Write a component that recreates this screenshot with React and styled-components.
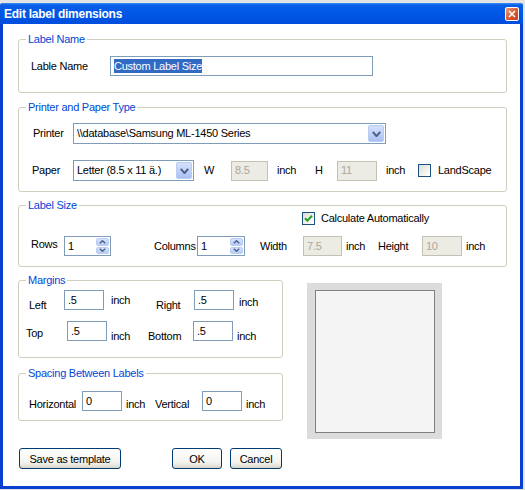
import styled, { createGlobalStyle } from "styled-components";

const GlobalStyle = createGlobalStyle`
  * {
    box-sizing: border-box;
  }
  html,
  body {
    margin: 0;
    padding: 0;
    background: #e4e4e4;
  }
  body {
    font-family: "Liberation Sans", Arial, sans-serif;
    font-size: 11px;
    letter-spacing: -0.25px;
    color: #000;
  }
`;

const Window = styled.div`
  width: 523px;
  height: 486px;
  margin-top: 3px;
  display: flex;
  flex-direction: column;
  background: #0b3fd0;
  border-radius: 3px 3px 0 0;
`;

const TitleBar = styled.div`
  flex: none;
  height: 21px;
  display: flex;
  align-items: center;
  justify-content: space-between;
  padding: 0 4px;
  border-radius: 3px 3px 0 0;
  background: linear-gradient(
    180deg,
    #3d8ff7 0px,
    #0a5fe8 2px,
    #0056e6 50%,
    #004ede 100%
  );
`;

const Title = styled.span`
  color: #fff;
  font-weight: bold;
  font-size: 12px;
  line-height: 14px;
`;

const CloseButton = styled.div`
  width: 14px;
  height: 14px;
  display: flex;
  align-items: center;
  justify-content: center;
  border: 1px solid #fff;
  border-radius: 2px;
  background: linear-gradient(135deg, #ee9a7c 0%, #d8582f 55%, #c4411c 100%);
`;

const Body = styled.div`
  flex: 1;
  margin: 0 3px 3px;
  padding: 9px 13px 0 15px;
  background: #fff;
`;

const Group = styled.fieldset`
  margin: ${(p) => p.$mt || 0}px 0 0;
  padding: 0 0 ${(p) => p.$pb || 0}px;
  min-width: 0;
  border: 1px solid #d0d0bf;
  border-radius: 3px;
`;

const Legend = styled.legend`
  margin-left: 7px;
  padding: 0 2px;
  line-height: 13px;
  color: #0046d5;
`;

const Row = styled.div`
  display: flex;
  align-items: center;
  height: ${(p) => p.$h || 20}px;
  margin-top: ${(p) => p.$mt || 0}px;
  padding-left: ${(p) => p.$pl || 0}px;
`;

const Text = styled.span`
  flex: none;
  width: ${(p) => (p.$w ? `${p.$w}px` : "auto")};
  margin-left: ${(p) => p.$ml || 0}px;
  margin-top: ${(p) => (p.$dy > 0 ? p.$dy * 2 : 0)}px;
  margin-bottom: ${(p) => (p.$dy < 0 ? -p.$dy * 2 : 0)}px;
  line-height: 13px;
  white-space: nowrap;
`;

const Box = styled.div`
  flex: none;
  width: ${(p) => p.$w}px;
  height: ${(p) => p.$h || 20}px;
  display: flex;
  align-items: center;
  padding-left: 3px;
  line-height: 13px;
  white-space: nowrap;
  border: 1px solid ${(p) => (p.$disabled ? "#c3c1b4" : "#7f9db9")};
  background: ${(p) => (p.$disabled ? "#ecebe4" : "#fff")};
  color: ${(p) => (p.$disabled ? "#aca899" : "#000")};
`;

const Value = styled.span`
  flex: 1;
  overflow: hidden;
`;

const Selected = styled.span`
  background: #316ac5;
  color: #fff;
  line-height: 14px;
`;

const DropButton = styled.div`
  flex: none;
  align-self: stretch;
  width: 16px;
  margin: 1px;
  display: flex;
  align-items: center;
  justify-content: center;
  border: 1px solid #b9cbf3;
  border-radius: 2px;
  background: linear-gradient(180deg, #d4e1fd 0%, #bccff9 60%, #a9c0f3 100%);
`;

const SpinColumn = styled.div`
  flex: none;
  align-self: stretch;
  width: 13px;
  margin: 1px;
  display: flex;
  flex-direction: column;
  gap: 1px;
`;

const SpinButton = styled.div`
  flex: 1;
  display: flex;
  align-items: center;
  justify-content: center;
  border: 1px solid #bccdf3;
  border-radius: 2px;
  background: linear-gradient(180deg, #d6e2fd 0%, #b7cbf8 100%);
`;

const Check = styled.div`
  flex: none;
  width: 13px;
  height: 13px;
  display: flex;
  align-items: center;
  justify-content: center;
  border: 1px solid #1c5180;
  background: linear-gradient(135deg, #dcdcd7 0%, #f6f6f3 70%, #fff 100%);
`;

const Lower = styled.div`
  display: flex;
  align-items: flex-start;
  margin-top: 7px;
`;

const LeftColumn = styled.div`
  flex: none;
  width: 265px;
`;

const Preview = styled.div`
  flex: none;
  width: 135px;
  height: 156px;
  margin: 9px 0 0 24px;
  padding: 7px 7px 6px 8px;
  display: flex;
  background: #dcdcdc;
`;

const Page = styled.div`
  flex: 1;
  border: 1px solid #808080;
  background: #f4f4f4;
`;

const ButtonRow = styled.div`
  display: flex;
  margin-top: 27px;
`;

const Button = styled.button`
  flex: none;
  width: ${(p) => p.$w}px;
  height: 21px;
  margin-left: ${(p) => p.$ml || 0}px;
  padding: 0;
  font: inherit;
  letter-spacing: inherit;
  color: #000;
  border: 1px solid #003c74;
  border-radius: 3px;
  background: linear-gradient(180deg, #ffffff 0%, #f3f3ef 70%, #e2ded4 92%, #d6d0c5 100%);
`;

function Chevron({ dir = "down", size = "small" }) {
  const big = size === "big";
  const w = big ? 9 : 7;
  const h = big ? 6 : 4;
  const pts =
    dir === "up"
      ? `0.8,${h - 0.8} ${w / 2},0.8 ${w - 0.8},${h - 0.8}`
      : `0.8,0.8 ${w / 2},${h - 0.8} ${w - 0.8},0.8`;
  return (
    <svg width={w} height={h} viewBox={`0 0 ${w} ${h}`}>
      <polyline
        points={pts}
        fill="none"
        stroke="#4d6185"
        strokeWidth={big ? 2 : 1.5}
      />
    </svg>
  );
}

function Combo({ w, children }) {
  return (
    <Box $w={w} $h={21}>
      <Value>{children}</Value>
      <DropButton>
        <Chevron size="big" />
      </DropButton>
    </Box>
  );
}

function Spin({ w, value }) {
  return (
    <Box $w={w}>
      <Value>{value}</Value>
      <SpinColumn>
        <SpinButton>
          <Chevron dir="up" />
        </SpinButton>
        <SpinButton>
          <Chevron />
        </SpinButton>
      </SpinColumn>
    </Box>
  );
}

function CheckBox({ checked }) {
  return (
    <Check>
      {checked && (
        <svg width="9" height="9" viewBox="0 0 9 9">
          <path
            d="M1 4.2 L3.4 6.6 L8 1.8"
            fill="none"
            stroke="#21a121"
            strokeWidth="2"
          />
        </svg>
      )}
    </Check>
  );
}

export default function App() {
  return (
    <>
      <GlobalStyle />
      <Window>
        <TitleBar>
          <Title>Edit label dimensions</Title>
          <CloseButton>
            <svg width="8" height="8" viewBox="0 0 8 8">
              <path d="M1 1 L7 7 M7 1 L1 7" stroke="#fff" strokeWidth="1.6" />
            </svg>
          </CloseButton>
        </TitleBar>
        <Body>
          <Group $pb={16}>
            <Legend>Label Name</Legend>
            <Row $mt={10} $pl={12}>
              <Text $w={79}>Lable Name</Text>
              <Box $w={263}>
                <Selected>Custom Label Size</Selected>
              </Box>
            </Row>
          </Group>

          <Group $mt={8} $pb={10}>
            <Legend>Printer and Paper Type</Legend>
            <Row $mt={9} $h={21} $pl={14}>
              <Text $w={40}>Printer</Text>
              <Combo w={313}>{"\\\\database\\Samsung ML-1450 Series"}</Combo>
            </Row>
            <Row $mt={16} $h={21} $pl={13}>
              <Text $w={41}>Paper</Text>
              <Combo w={121}>Letter (8.5 x 11 ä.)</Combo>
              <Text $ml={10} $w={27}>W</Text>
              <Box $w={37} $disabled>8.5</Box>
              <Text $ml={9} $w={38}>inch</Text>
              <Text $w={22}>H</Text>
              <Box $w={40} $disabled>11</Box>
              <Text $ml={9} $w={32}>inch</Text>
              <CheckBox />
              <Text $ml={7}>LandScape</Text>
            </Row>
          </Group>

          <Group $mt={7} $pb={10}>
            <Legend>Label Size</Legend>
            <Row $h={13} $pl={283}>
              <CheckBox checked />
              <Text $ml={6}>Calculate Automatically</Text>
            </Row>
            <Row $mt={11} $pl={12}>
              <Text $w={33} $dy={-2}>Rows</Text>
              <Spin w={47} value="1" />
              <Text $ml={43} $w={43}>Columns</Text>
              <Spin w={48} value="1" />
              <Text $ml={15} $w={43}>Width</Text>
              <Box $w={39} $disabled>7.5</Box>
              <Text $ml={4} $w={32}>inch</Text>
              <Text $w={44}>Height</Text>
              <Box $w={40} $disabled>10</Box>
              <Text $ml={4}>inch</Text>
            </Row>
          </Group>

          <Lower>
            <LeftColumn>
              <Group $pb={16}>
                <Legend>Margins</Legend>
                <Row $mt={3} $pl={10}>
                  <Text $w={35} $dy={5}>Left</Text>
                  <Box $w={40}>.5</Box>
                  <Text $ml={7} $w={45}>inch</Text>
                  <Text $w={38} $dy={5}>Right</Text>
                  <Box $w={40}>.5</Box>
                  <Text $ml={5} $dy={2}>inch</Text>
                </Row>
                <Row $mt={11} $pl={7}>
                  <Text $w={41} $dy={2}>Top</Text>
                  <Box $w={40}>.5</Box>
                  <Text $ml={4} $w={37} $dy={5}>inch</Text>
                  <Text $w={45} $dy={5}>Bottom</Text>
                  <Box $w={40}>.5</Box>
                  <Text $ml={4} $dy={5}>inch</Text>
                </Row>
              </Group>

              <Group $mt={9} $pb={9}>
                <Legend>Spacing Between Labels</Legend>
                <Row $mt={11} $pl={10}>
                  <Text $w={53} $dy={3}>Horizontal</Text>
                  <Box $w={40}>0</Box>
                  <Text $ml={4} $w={29} $dy={3}>inch</Text>
                  <Text $w={47} $dy={3}>Vertical</Text>
                  <Box $w={40}>0</Box>
                  <Text $ml={4} $dy={3}>inch</Text>
                </Row>
              </Group>

              <ButtonRow>
                <Button $w={102} $ml={1}>Save as template</Button>
                <Button $w={50} $ml={51}>OK</Button>
                <Button $w={52} $ml={8}>Cancel</Button>
              </ButtonRow>
            </LeftColumn>
            <Preview>
              <Page />
            </Preview>
          </Lower>
        </Body>
      </Window>
    </>
  );
}
